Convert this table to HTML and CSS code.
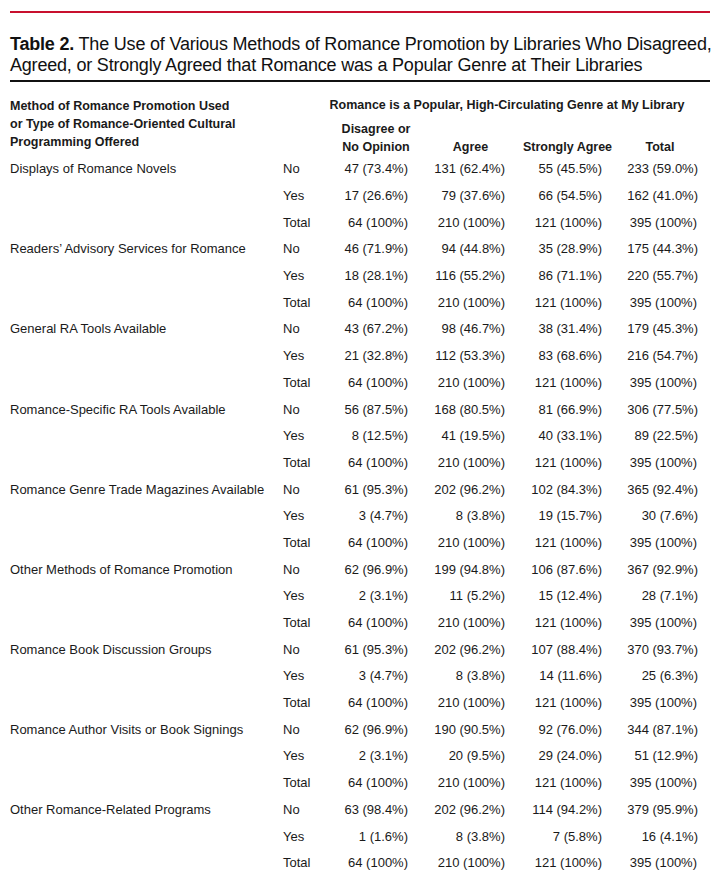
FILE: index.html
```html
<!DOCTYPE html>
<html>
<head>
<meta charset="utf-8">
<link rel="stylesheet" href="styles.css">
</head>
<body>
<div class="page">
  <div class="rule-red"></div>
  <h1 class="title"><b>Table 2.</b> The Use of Various Methods of Romance Promotion by Libraries Who Disagreed,<br>Agreed, or Strongly Agreed that Romance was a Popular Genre at Their Libraries</h1>
  <div class="rule-black"></div>
  <table class="data">
    <colgroup>
      <col class="c-label"><col class="c-yn"><col class="c-v1"><col class="c-v2"><col class="c-v3"><col class="c-v4"><col class="c-pad">
    </colgroup>
    <thead>
      <tr>
        <th class="h-method" rowspan="2">Method of Romance Promotion Used or Type of Romance-Oriented Cultural Programming Offered</th>
        <th></th>
        <th class="h-group" colspan="4"><span class="hd hd-group">Romance is a Popular, High-Circulating Genre at My Library</span></th>
        <th></th>
      </tr>
      <tr class="h-sub">
        <th></th>
        <th><span class="hd s1">Disagree or<br>No Opinion</span></th>
        <th><span class="hd s2">Agree</span></th>
        <th><span class="hd s3">Strongly Agree</span></th>
        <th><span class="hd s4">Total</span></th>
        <th></th>
      </tr>
    </thead>
    <tbody id="rows"></tbody>
  </table>
</div>
<script src="app.js"></script>
</body>
</html>
```
FILE: app.js
```js
var data = [
  ["Displays of Romance Novels", [["47 (73.4%)","131 (62.4%)","55 (45.5%)","233 (59.0%)"],["17 (26.6%)","79 (37.6%)","66 (54.5%)","162 (41.0%)"]]],
  ["Readers\u2019 Advisory Services for Romance", [["46 (71.9%)","94 (44.8%)","35 (28.9%)","175 (44.3%)"],["18 (28.1%)","116 (55.2%)","86 (71.1%)","220 (55.7%)"]]],
  ["General RA Tools Available", [["43 (67.2%)","98 (46.7%)","38 (31.4%)","179 (45.3%)"],["21 (32.8%)","112 (53.3%)","83 (68.6%)","216 (54.7%)"]]],
  ["Romance-Specific RA Tools Available", [["56 (87.5%)","168 (80.5%)","81 (66.9%)","306 (77.5%)"],["8 (12.5%)","41 (19.5%)","40 (33.1%)","89 (22.5%)"]]],
  ["Romance Genre Trade Magazines Available", [["61 (95.3%)","202 (96.2%)","102 (84.3%)","365 (92.4%)"],["3 (4.7%)","8 (3.8%)","19 (15.7%)","30 (7.6%)"]]],
  ["Other Methods of Romance Promotion", [["62 (96.9%)","199 (94.8%)","106 (87.6%)","367 (92.9%)"],["2 (3.1%)","11 (5.2%)","15 (12.4%)","28 (7.1%)"]]],
  ["Romance Book Discussion Groups", [["61 (95.3%)","202 (96.2%)","107 (88.4%)","370 (93.7%)"],["3 (4.7%)","8 (3.8%)","14 (11.6%)","25 (6.3%)"]]],
  ["Romance Author Visits or Book Signings", [["62 (96.9%)","190 (90.5%)","92 (76.0%)","344 (87.1%)"],["2 (3.1%)","20 (9.5%)","29 (24.0%)","51 (12.9%)"]]],
  ["Other Romance-Related Programs", [["63 (98.4%)","202 (96.2%)","114 (94.2%)","379 (95.9%)"],["1 (1.6%)","8 (3.8%)","7 (5.8%)","16 (4.1%)"]]]
];
var totals = ["64 (100%)","210 (100%)","121 (100%)","395 (100%)"];
var tb = document.getElementById("rows");
var html = "";
data.forEach(function (d) {
  var lines = [["No", d[1][0]], ["Yes", d[1][1]], ["Total", totals]];
  lines.forEach(function (l, i) {
    html += "<tr><td class=\"lbl\">" + (i === 0 ? d[0] : "") + "</td><td class=\"yn\">" + l[0] + "</td>";
    l[1].forEach(function (v, j) {
      html += "<td class=\"v" + (j === 3 && v.indexOf("100%") > -1 ? " v-full" : "") + "\">" + v + "</td>";
    });
    html += "<td></td></tr>";
  });
});
tb.innerHTML = html;
```
FILE: styles.css
```css
html, body {
  margin: 0;
  padding: 0;
  background: #ffffff;
}
body {
  font-family: "Liberation Sans", Arial, sans-serif;
  color: #1a1a1a;
}
.page {
  padding: 11px 10px 0 10px;
}
.rule-red {
  height: 2px;
  background: #c8102e;
}
.title {
  margin: 21px 0 0 0;
  font-family: "Liberation Sans", Arial, sans-serif;
  font-weight: normal;
  font-size: 18px;
  letter-spacing: -0.2px;
  line-height: 21px;
  white-space: nowrap;
  color: #111;
}
.title b {
  font-weight: bold;
}
.rule-black {
  margin-top: 4px;
  height: 2px;
  background: #111;
}
.data {
  border-collapse: collapse;
  table-layout: fixed;
  width: 700px;
  margin-top: 13px;
  font-size: 13px;
}
.c-label { width: 273px; }
.c-yn { width: 47px; }
.c-v1 { width: 78px; }
.c-v2 { width: 97px; }
.c-v3 { width: 97px; }
.c-v4 { width: 96px; }
.c-pad { width: 12px; }
.data th {
  font-weight: bold;
  font-size: 12.5px;
  line-height: 18px;
  padding: 0;
  vertical-align: bottom;
  text-align: center;
}
.h-method {
  text-align: left !important;
  padding-top: 2px !important;
  padding-right: 40px !important;
  vertical-align: top !important;
}
.h-group {
  padding-top: 1px !important;
  padding-bottom: 6px !important;
}
.hd {
  display: block;
  margin: 0 -40px;
  white-space: nowrap;
}
.hd-group { padding-right: 14px; }
.s1 { padding-left: 14px; }
.s2 { padding-left: 28px; }
.s3 { padding-left: 28px; }
.s4 { padding-left: 20px; }
.data td {
  height: 26.7px;
  padding: 0;
  line-height: 16px;
  white-space: nowrap;
}
.lbl { text-align: left; }
.yn { text-align: left; }
.v { text-align: right; }
.v-full { padding-right: 1px !important; }
```
